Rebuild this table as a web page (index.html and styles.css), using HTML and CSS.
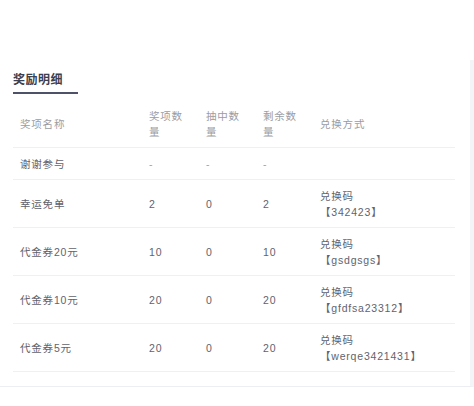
FILE: index.html
```html
<!DOCTYPE html>
<html lang="zh">
<head>
<meta charset="utf-8">
<link rel="stylesheet" href="styles.css">
</head>
<body>
<div class="panel">
  <div class="title">奖励明细</div>
  <table class="prize-table">
    <colgroup>
      <col class="c-name"><col class="c-num"><col class="c-num"><col class="c-num"><col class="c-code">
    </colgroup>
    <thead>
      <tr><th>奖项名称</th><th>奖项数量</th><th>抽中数量</th><th>剩余数量</th><th>兑换方式</th></tr>
    </thead>
    <tbody>
      <tr><td>谢谢参与</td><td class="dash">-</td><td class="dash">-</td><td class="dash">-</td><td></td></tr>
      <tr><td>幸运免单</td><td>2</td><td>0</td><td>2</td><td>兑换码<br>【342423】</td></tr>
      <tr><td>代金券20元</td><td>10</td><td>0</td><td>10</td><td>兑换码<br>【gsdgsgs】</td></tr>
      <tr><td>代金券10元</td><td>20</td><td>0</td><td>20</td><td>兑换码<br>【gfdfsa23312】</td></tr>
      <tr><td>代金券5元</td><td>20</td><td>0</td><td>20</td><td>兑换码<br>【werqe3421431】</td></tr>
    </tbody>
  </table>
</div>
</body>
</html>
```
FILE: styles.css
```css
html, body {
  margin: 0;
  padding: 0;
  background: #ffffff;
}
body {
  font-family: "Liberation Sans", "Noto Sans CJK SC", sans-serif;
  font-size: 10.5px;
  color: #5f636d;
}
.panel {
  margin-top: 60px;
  padding: 12px 15px 14px 13px;
  border-right: 4px solid #f3f4f8;
  border-bottom: 1px solid #eceef3;
}
.title {
  width: 65px;
  font-size: 12px;
  font-weight: bold;
  line-height: 16px;
  letter-spacing: 0.5px;
  color: #3b4050;
  padding-bottom: 4px;
  border-bottom: 2px solid #4d5268;
  margin-bottom: 6px;
}
.prize-table {
  width: 100%;
  border-collapse: collapse;
  table-layout: fixed;
}
.c-name { width: 129px; }
.c-num { width: 57px; }
.prize-table th,
.prize-table td {
  text-align: left;
  vertical-align: middle;
  padding: 8px 7px 7px 7px;
  line-height: 16px;
  letter-spacing: 0.8px;
  border-bottom: 1px solid #eef0f5;
  word-break: break-all;
}
.prize-table th {
  font-weight: normal;
  color: #9a9ca3;
}
.prize-table td.dash {
  color: #a0a3aa;
}
```
